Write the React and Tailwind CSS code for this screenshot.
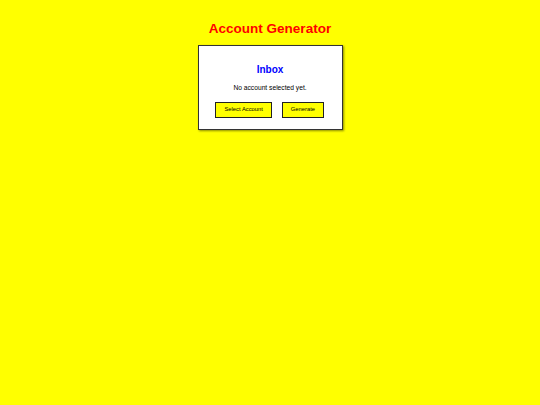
import React from "react";

export default function App() {
    return (
        <div className="min-h-[405px] w-full bg-[#ffff00] flex flex-col items-center font-['Liberation_Sans',Arial,sans-serif]">
            <h1 className="pt-[20px] text-[13.5px] leading-[17px] font-bold text-[#ff0000]">Account Generator</h1>

            <div className="mt-[8px] w-[145px] bg-white border border-[#333333] shadow-[1px_1px_2px_rgba(0,0,0,0.45)] flex flex-col items-center pt-[18px] pb-[11px]">
                <h2 className="text-[10px] leading-[12px] font-bold text-[#0000ff]">Inbox</h2>
                <p className="mt-[7px] text-[6.7px] leading-[9px] text-black">No account selected yet.</p>
                <div className="mt-[10px] flex gap-[10px] ml-[-0.5px]">
                    <button type="button" className="h-[16px] px-[8px] bg-[#ffff00] border border-[#222222] text-[5.8px] leading-none text-black">
                        Select Account
                    </button>
                    <button type="button" className="h-[16px] px-[8px] bg-[#ffff00] border border-[#222222] text-[5.8px] leading-none text-black">
                        Generate
                    </button>
                </div>
            </div>
        </div>
    );
}
